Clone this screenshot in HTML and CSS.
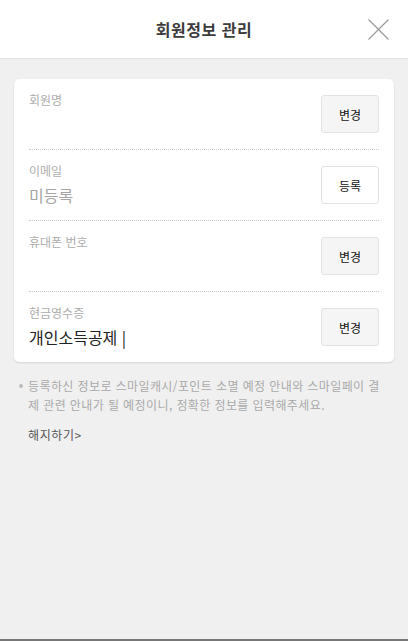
FILE: index.html
```html
<!DOCTYPE html>
<html lang="ko">
<head>
    <meta charset="UTF-8">
    <meta name="viewport" content="width=device-width, initial-scale=1.0">
    <title>회원정보 관리</title>
    <link rel="stylesheet" href="styles.css">
</head>
<body>
    <div class="page">
        <header class="top-bar">
            <h1>회원정보 관리</h1>
            <button class="close-button" aria-label="닫기">
                <svg xmlns="http://www.w3.org/2000/svg" viewBox="0 0 21 21"><path d="M0.5 0.5L20.5 20.5M20.5 0.5L0.5 20.5"/></svg>
            </button>
        </header>

        <div class="info-card">
            <div class="info-row">
                <div class="info-text">
                    <p class="info-label">회원명</p>
                    <p class="info-value"></p>
                </div>
                <button class="row-button">변경</button>
            </div>
            <div class="info-row">
                <div class="info-text">
                    <p class="info-label">이메일</p>
                    <p class="info-value empty">미등록</p>
                </div>
                <button class="row-button white">등록</button>
            </div>
            <div class="info-row">
                <div class="info-text">
                    <p class="info-label">휴대폰 번호</p>
                    <p class="info-value"></p>
                </div>
                <button class="row-button">변경</button>
            </div>
            <div class="info-row">
                <div class="info-text">
                    <p class="info-label">현금영수증</p>
                    <p class="info-value">개인소득공제 |</p>
                </div>
                <button class="row-button">변경</button>
            </div>
        </div>

        <p class="notice">등록하신 정보로 스마일캐시/포인트 소멸 예정 안내와 스마일페이 결제 관련 안내가 될 예정이니, 정확한 정보를 입력해주세요.</p>

        <a class="cancel-link" href="#">해지하기&gt;</a>
    </div>
</body>
</html>
```

FILE: styles.css
```css
* {
    box-sizing: border-box;
}
body {
    margin: 0;
    font-family: "Noto Sans CJK KR", "Noto Sans", sans-serif;
    background-color: #f0f0f0;
}
.page {
    min-height: 100vh;
    border-bottom: 2px solid #777;
    background-color: #f0f0f0;
}
.top-bar {
    position: relative;
    height: 59px;
    background-color: #fff;
    border-bottom: 1px solid #e3e3e3;
    display: flex;
    align-items: center;
    justify-content: center;
}
.top-bar h1 {
    margin: 0;
    font-size: 16px;
    font-weight: bold;
    color: #3c3c3c;
    letter-spacing: 0.5px;
}
.close-button {
    position: absolute;
    right: 19px;
    top: 19px;
    width: 21px;
    height: 21px;
    padding: 0;
    border: none;
    background: none;
    cursor: pointer;
}
.close-button svg {
    display: block;
    width: 21px;
    height: 21px;
    stroke: #9a9a9a;
    stroke-width: 1.2;
    fill: none;
}
.info-card {
    margin: 20px 14px 0;
    padding: 0 15px;
    background-color: #fff;
    border-radius: 5px;
    box-shadow: 0 1px 2px rgba(0, 0, 0, 0.12);
}
.info-row {
    height: 71px;
    display: flex;
    align-items: center;
    justify-content: space-between;
    border-bottom: 1px dotted #c8c8c8;
}
.info-row:last-child {
    height: 70px;
    border-bottom: none;
}
.info-text {
    align-self: flex-start;
    padding-top: 12px;
}
.info-label {
    margin: 0;
    font-size: 12px;
    line-height: 18px;
    color: #adadad;
}
.info-value {
    margin: 3px 0 0;
    height: 24px;
    font-size: 16px;
    line-height: 24px;
    color: #222;
}
.info-value.empty {
    color: #a5a5a5;
}
.row-button {
    width: 58px;
    height: 38px;
    padding: 0;
    border: 1px solid #e2e2e2;
    border-radius: 3px;
    background-color: #f5f5f5;
    font-family: inherit;
    font-size: 12px;
    color: #111;
    cursor: pointer;
}
.row-button.white {
    background-color: #fff;
}
.notice {
    position: relative;
    margin: 14px 18px 0 14px;
    padding-left: 14px;
    font-size: 12px;
    line-height: 19px;
    color: #aaa;
    letter-spacing: 0.4px;
    word-break: break-all;
}
.notice::before {
    content: "";
    position: absolute;
    left: 5px;
    top: 8px;
    width: 4px;
    height: 4px;
    border-radius: 50%;
    background-color: #bbb;
}
.cancel-link {
    display: inline-block;
    margin: 12px 0 0 28px;
    font-size: 12px;
    line-height: 18px;
    letter-spacing: 0.6px;
    color: #555;
    text-decoration: none;
}
```
